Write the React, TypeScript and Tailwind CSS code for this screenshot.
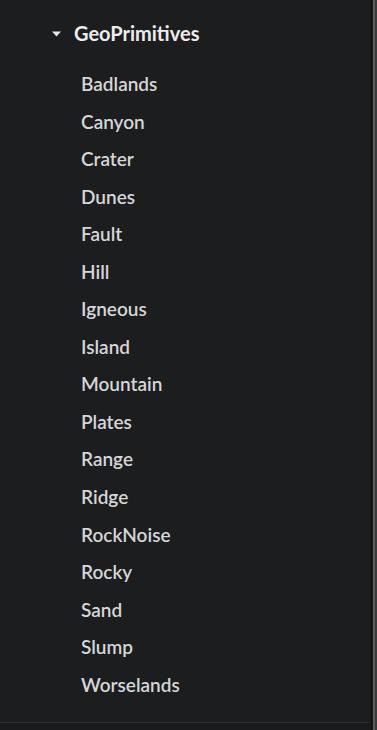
const items = [
  "Badlands",
  "Canyon",
  "Crater",
  "Dunes",
  "Fault",
  "Hill",
  "Igneous",
  "Island",
  "Mountain",
  "Plates",
  "Range",
  "Ridge",
  "RockNoise",
  "Rocky",
  "Sand",
  "Slump",
  "Worselands",
];

export default function App() {
  return (
    <div
      className="flex h-[730px] w-[377px] bg-[#1c1d1f]"
      style={{ fontFamily: "Lato, 'Noto Sans', sans-serif" }}
    >
      <div className="flex flex-1 flex-col">
        <div className="flex-1 pl-[52px] pt-[21px]">
          <div className="flex items-center gap-[13px]">
            <svg width="9" height="6" viewBox="0 0 9 6" className="mt-[1px]">
              <path d="M0 0.5 H9 L4.5 5.5 Z" fill="#e6e6e6" />
            </svg>
            <span className="text-[20px] font-bold leading-[24px] text-[#ececec]">
              GeoPrimitives
            </span>
          </div>
          <ul className="mt-[28px] pl-[29px]">
            {items.map((item) => (
              <li
                key={item}
                className="h-[37.55px] text-[19px] font-semibold leading-[22px] text-[#d6d6d6]"
              >
                {item}
              </li>
            ))}
          </ul>
        </div>
        <div className="h-[8px] border-t border-[#2e2f31] bg-[#1a1b1d]" />
      </div>
      <div className="w-[3px] bg-[#161719]" />
      <div className="w-[2px] bg-[#5c5c5c]" />
      <div className="w-[2px] bg-[#3a3a3a]" />
    </div>
  );
}
